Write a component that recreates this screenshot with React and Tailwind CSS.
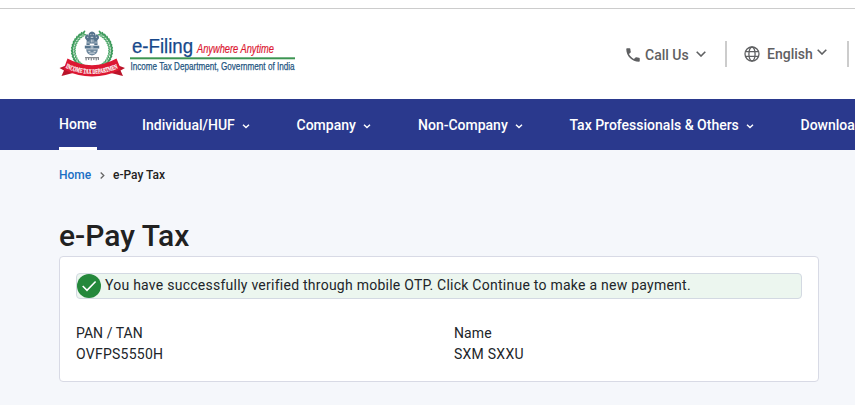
import React from "react";

const leaves = Array.from({ length: 16 }, (_, i) => 22 + i * 8.6);

function Emblem() {
  return (
    <svg className="h-12 w-[68px] shrink-0" viewBox="0 0 68 48" aria-label="Income Tax Department">
      {[1, -1].map((side) => (
        <g key={side} transform={side === 1 ? undefined : "translate(66 0) scale(-1 1)"}>
          <path d="M40.5 4 A19 19 0 0 1 46 36" fill="none" stroke="#7dbb90" strokeWidth="1.6" />
          {leaves.map((deg) => (
            <g key={deg} transform={`translate(33 21.5) rotate(${deg}) translate(0 -18.6)`}>
              <ellipse cx="0" cy="-1.5" rx="2.1" ry="0.9" fill="#3c9a5b" transform="rotate(28)" />
              <ellipse cx="0" cy="1.5" rx="1.9" ry="0.8" fill="#4fa86b" transform="rotate(-28)" />
            </g>
          ))}
        </g>
      ))}
      <g transform="translate(-3 0) scale(1.075 1.04)">
        <g fill="#56748d">
          <path d="M30.6 4 Q33.5 1 36.4 4 L36.8 8 L35.4 14 H31.6 L30.2 8 Z" />
          <path d="M30 5 Q26.6 5.5 27 9 L28.6 11 L28.3 15.5 H31.4 L31.2 9 Z" />
          <path d="M37 5 Q40.4 5.5 40 9 L38.4 11 L38.7 15.5 H35.6 L35.8 9 Z" />
          <path d="M26.8 16 H40.2 V18.8 H26.8 Z" />
          <path d="M28 19.5 H39 Q38.6 24.5 33.5 25.5 Q28.4 24.5 28 19.5 Z" opacity=".85" />
        </g>
        <path d="M32 5.4 h.9 M34.2 5.4 h.9 M32.3 8 h2.4 M29 8 h1 M37 8 h1 M32.8 10 v3 M34.4 10 v3 M29.8 12 v2 M37.2 12 v2 M30 21.5 h2 M35 21.5 h2 M31 23.2 h5" stroke="#fff" strokeWidth=".7" />
        <circle cx="33.5" cy="17.4" r="1" fill="none" stroke="#fff" strokeWidth=".5" />
        <path d="M27 27.6 h13 M28 28 v2.2 M30.4 28 v1.8 M32.8 28 v2.2 M35.2 28 v1.8 M37.4 28 v2.2 M39.4 28 v1.8" stroke="#4b5157" strokeWidth=".8" />
      </g>
      <path d="M8 36 L.5 39 L5 41.5 L2.5 47 L14 44 Z M58 36 L66 39 L61.5 41.5 L64 47 L52 44 Z" fill="#b9142a" />
      <path d="M8.5 29.5 Q33 43 57.5 29.5 L62 40.5 Q33 54.5 4.5 40.5 Z" fill="#dc1832" />
      <path id="ribbon-text" d="M6.4 38.8 Q33 51 60 38.8" fill="none" />
      <text fill="#fff" stroke="#fff" strokeWidth=".2" fontFamily="Liberation Serif, serif" fontWeight="700" fontSize="7">
        <textPath href="#ribbon-text" textLength="57" lengthAdjust="spacingAndGlyphs">INCOME TAX DEPARTMENT</textPath>
      </text>
    </svg>
  );
}

function Wordmark() {
  return (
    <svg className="h-12 w-[172px] shrink-0" viewBox="0 0 172 48" fontFamily="Liberation Sans, Arial, sans-serif">
      <text x="5" y="24" fontSize="20" fill="#17488a" stroke="#17488a" strokeWidth=".25" textLength="61" lengthAdjust="spacingAndGlyphs">e-Filing</text>
      <text x="70" y="24" fontSize="12.5" fontStyle="italic" fill="#dc1832" stroke="#dc1832" strokeWidth=".2" textLength="77" lengthAdjust="spacingAndGlyphs">Anywhere Anytime</text>
      <rect x="3" y="28.3" width="165" height="2" fill="#3c9552" />
      <text x="3.5" y="41" fontSize="11.5" fill="#1d5480" stroke="#1d5480" strokeWidth=".25" textLength="164" lengthAdjust="spacingAndGlyphs">Income Tax Department, Government of India</text>
    </svg>
  );
}

function Chevron({ className }) {
  return (
    <svg className={className} viewBox="0 0 10 6" fill="none" stroke="currentColor" strokeWidth="1.6">
      <path d="M.7.7 5 5 9.3.7" />
    </svg>
  );
}

function SmallChevron() {
  return (
    <svg className="ml-[6.5px] mt-[2px] h-[5px] w-[8px]" viewBox="0 0 8 5" fill="none" stroke="currentColor" strokeWidth="1.4">
      <path d="M1 .8 4 3.6 7 .8" />
    </svg>
  );
}

function Phone() {
  return (
    <svg className="ml-[-2px] mt-[2px] h-[18px] w-[18px]" viewBox="0 0 24 24" fill="currentColor">
      <path d="M6.62 10.79c1.44 2.83 3.76 5.14 6.59 6.59l2.2-2.2c.27-.27.67-.36 1.02-.24 1.12.37 2.33.57 3.57.57.55 0 1 .45 1 1V20c0 .55-.45 1-1 1C10.61 21 3 13.39 3 4c0-.55.45-1 1-1h3.5c.55 0 1 .45 1 1 0 1.25.2 2.45.57 3.57.11.35.03.74-.25 1.02z" />
    </svg>
  );
}

function Globe() {
  return (
    <svg className="h-4 w-4" viewBox="0 0 16 16" fill="none" stroke="currentColor" strokeWidth="1.3">
      <circle cx="8" cy="8" r="7" />
      <ellipse cx="8" cy="8" rx="3.1" ry="7" />
      <path d="M1.5 5.6h13M1.5 10.4h13" />
    </svg>
  );
}

const menus = [
  { label: "Individual/HUF", start: "ml-[45px]", width: "w-[93px]" },
  { label: "Company", start: "ml-[47px]", width: "w-[60px]" },
  { label: "Non-Company", start: "ml-[47px]", width: "w-[90px]" },
  { label: "Tax Professionals & Others", start: "ml-[47px]", width: "w-[170px]" },
];

export default function App() {
  return (
    <div className="h-[405px] w-[855px] overflow-hidden bg-[#f5f7fb] font-[Roboto,sans-serif] text-[#212529]">
      <div className="h-[9px] border-b border-[#cccccc] bg-white" />
      <header className="flex h-[90px] bg-white pl-[59px]">
        <div className="flex pt-5">
          <Emblem />
          <Wordmark />
        </div>
        <div className="ml-[327px] flex h-[90px] shrink-0 items-center text-[14px] font-medium text-[#5f6062]">
          <Phone />
          <span className="ml-[3px] w-[45px] whitespace-nowrap pt-0.5">Call Us</span>
          <Chevron className="ml-[6px] h-[6px] w-[10px]" />
          <span className="ml-[19px] h-[26px] w-[2px] bg-[#cccccc]" />
          <span className="ml-[17px]"><Globe /></span>
          <span className="ml-[7px] w-[46px] whitespace-nowrap">English</span>
          <Chevron className="mb-[4px] ml-[4px] h-[6px] w-[10px]" />
          <span className="ml-[20px] h-[26px] w-[2px] bg-[#cccccc]" />
        </div>
      </header>
      <nav className="flex h-[51px] items-center overflow-hidden whitespace-nowrap bg-[#2a398d] pl-[59px] text-[14px] font-medium text-white">
        <div className="flex h-full w-[38px] shrink-0 items-center border-b-[3px] border-white pt-[3px]">Home</div>
        {menus.map((m) => (
          <div key={m.label} className={`flex shrink-0 items-center pt-[2px] ${m.start}`}>
            <span className={m.width}>{m.label}</span>
            <SmallChevron />
          </div>
        ))}
        <span className="ml-[46.5px] shrink-0 pt-[2px]">Downloads</span>
      </nav>
      <main className="pl-[59px]">
        <div className="flex h-[50px] items-center text-[12px] font-medium">
          <span className="w-[32px] text-[#1a6fc4]">Home</span>
          <svg className="ml-[9px] h-[7px] w-[5px]" viewBox="0 0 5 7" fill="none" stroke="#666" strokeWidth="1.3"><path d="M.7.5 3.8 3.5.7 6.5" /></svg>
          <span className="ml-[8px] text-[#212121]">e-Pay Tax</span>
        </div>
        <h1 className="mt-[16px] h-10 text-[30px] font-medium leading-10 text-[#212121]">e-Pay Tax</h1>
        <section className="h-[126px] w-[760px] rounded-[4px] border border-[#d8dae5] bg-white px-4 pt-4">
          <div className="flex h-[26px] items-center rounded-[4px] border border-[#d3d9e2] bg-[#ecf6ef]">
            <svg className="h-6 w-6 shrink-0" viewBox="0 0 24 24">
              <circle cx="12" cy="12" r="12" fill="#24883b" />
              <path d="m5.7 12 4.3 4.4 8.6-8.9" fill="none" stroke="#fff" strokeWidth="1.6" />
            </svg>
            <p className="ml-1 whitespace-nowrap pb-[2px] text-[14px] tracking-[0.25px]">You have successfully verified through mobile OTP. Click Continue to make a new payment.</p>
          </div>
          <div className="mt-[24px] grid grid-cols-[378px_1fr] text-[14px] leading-[21px] tracking-[0.25px]">
            <div><div className="tracking-[0.05px]">PAN / TAN</div><div>OVFPS5550H</div></div>
            <div><div className="tracking-[0.1px]">Name</div><div>SXM SXXU</div></div>
          </div>
        </section>
      </main>
    </div>
  );
}
